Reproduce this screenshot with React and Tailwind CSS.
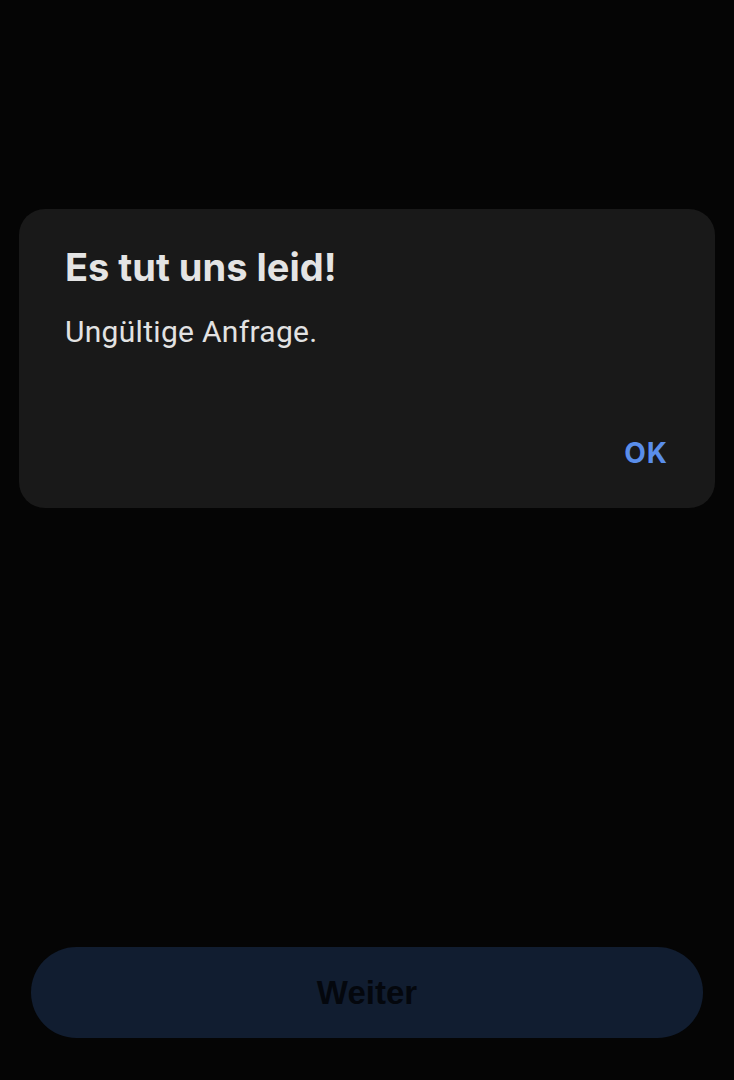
import React from 'react';

export default function App() {
  return (
    <div className="min-h-screen w-full bg-[#050505] flex flex-col" style={{ height: 1080 }}>
      <div className="px-[19px] pt-[209px]">
        <div className="bg-[#191919] rounded-[26px] h-[299px] pl-[46px] pr-[47px] pt-[35px] flex flex-col">
          <h1 className="font-['Inter',sans-serif] font-bold text-[38px] leading-[46px] text-[#e4e4e4]">
            Es tut uns leid!
          </h1>
          <p className="mt-[24px] font-['Roboto',sans-serif] text-[30px] leading-[36px] tracking-[0.3px] text-[#e2e2e2]">
            Ungültige Anfrage.
          </p>
          <div className="mt-auto mb-[38px] flex justify-end">
            <button className="font-['Inter',sans-serif] font-bold text-[28px] leading-[34px] tracking-[1px] text-[#5a8eea]">
              OK
            </button>
          </div>
        </div>
      </div>
      <div className="flex-1" />
      <div className="px-[31px] pb-[42px]">
        <button className="w-full h-[91px] rounded-full bg-[#111d30] flex items-center justify-center font-['Liberation_Sans',Arial,sans-serif] font-bold text-[33px] text-[#04070d]">
          Weiter
        </button>
      </div>
    </div>
  );
}
